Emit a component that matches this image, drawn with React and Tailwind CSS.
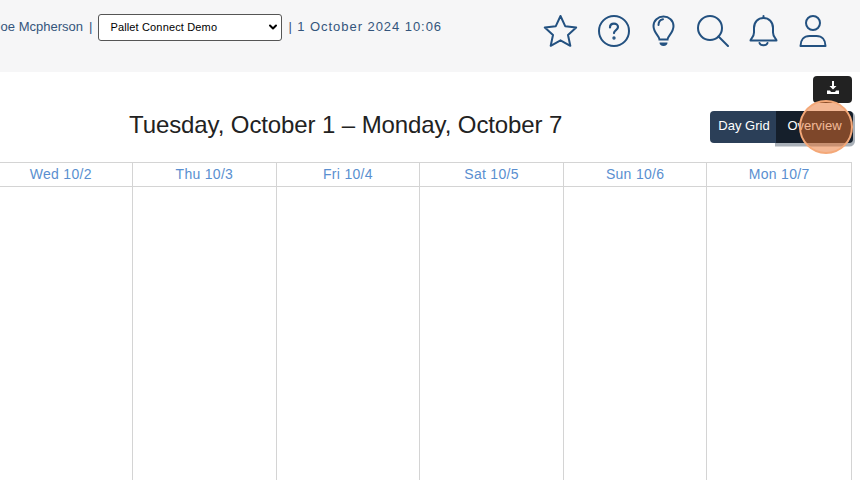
import { ChevronDown } from 'lucide-react'

const days = ['Wed 10/2', 'Thu 10/3', 'Fri 10/4', 'Sat 10/5', 'Sun 10/6', 'Mon 10/7']

const Star = () => (
  <svg width="35" height="33" viewBox="0 0 35 33" fill="none" stroke="#235180" strokeWidth="2" strokeLinejoin="round">
    <path d="M17.500 2l4.700 10.200 11 1.300-8.200 7.500 2.300 10.800-9.800-5.500-9.800 5.500L10 21 1.800 13.500l11-1.300z" />
  </svg>
)

const Help = () => (
  <svg width="32" height="32" viewBox="0 0 32 32" fill="none" stroke="#235180" strokeWidth="2" strokeLinecap="round">
    <circle cx="16" cy="16" r="15" />
    <path d="M12 12.500c0-2.400 1.800-3.800 4-3.800s4 1.400 4 3.400c0 3-4 3-4 6" strokeWidth="2.200" />
    <circle cx="16" cy="23" r="0.7" />
  </svg>
)

const Bulb = () => (
  <svg width="23" height="32" viewBox="0 0 23 32" fill="none" stroke="#235180" strokeWidth="2" strokeLinecap="round">
    <path d="M7.500 24.500c0-3.500-6-6.500-6-13.500C1.500 5.500 6 1.500 11.500 1.500s10 4 10 9.500c0 7-6 10-6 13.500z" />
    <path d="M6.500 10c0-3 1.800-5.200 4.500-5.700" />
    <path d="M7.500 27.500h8c0 2-1.500 3.500-4 3.500s-4-1.500-4-3.500z" fill="#235180" stroke="none" />
  </svg>
)

const Search = () => (
  <svg width="32" height="32" viewBox="0 0 32 32" fill="none" stroke="#235180" strokeWidth="2" strokeLinecap="round">
    <circle cx="13" cy="13" r="12" />
    <path d="M21.500 21.500l9.500 9.500" />
  </svg>
)

const Bell = () => (
  <svg width="29" height="32" viewBox="0 0 29 32" fill="none" stroke="#235180" strokeWidth="2" strokeLinecap="round" strokeLinejoin="round">
    <path d="M14.500 1v2" />
    <path d="M1.500 25.500c0-2 3.500-3 3.500-8V13c0-6 4-10 9.500-10S24 7 24 13v4.500c0 5 3.500 6 3.500 8z" />
    <path d="M10.500 28c1 3 7 3 8 0" />
  </svg>
)

const User = () => (
  <svg width="28" height="32" viewBox="0 0 28 32" fill="none" stroke="#235180" strokeWidth="2" strokeLinecap="round" strokeLinejoin="round">
    <circle cx="14" cy="8" r="7" />
    <path d="M1.500 31c0-6 3.500-10 9-10h7c5.500 0 9 4 9 10z" />
  </svg>
)

const App = () => {
  return (
    <div className="h-[480px] w-[860px] overflow-hidden bg-white font-['Liberation_Sans',sans-serif]">
      {/* Header */}
      <div className="flex h-[72px] bg-[#f6f6f7]">
        <div className="flex h-[54px] w-[460px] shrink-0 items-center text-[13px] text-[#34557c]">
          <div className="flex w-[83px] shrink-0 justify-end">
            <span className="shrink-0 whitespace-nowrap">Joe Mcpherson</span>
          </div>
          <span className="ml-[6px]">|</span>
          <div className="ml-[6px] flex h-[27px] w-[184px] shrink-0 items-center justify-between rounded-[3px] border border-[#555] bg-white pl-[11px] pr-[2px] text-[11px] tracking-[0.15px] text-black">
            <span>Pallet Connect Demo</span>
            <ChevronDown className="h-3 w-3" strokeWidth={4} />
          </div>
          <span className="ml-[6px] whitespace-nowrap tracking-[0.95px]">| 1 October 2024 10:06</span>
        </div>
        <div className="ml-[83px] mt-[14px] flex h-[33px] items-center">
          <Star />
          <span className="ml-[20px]"><Help /></span>
          <span className="ml-[22px]"><Bulb /></span>
          <span className="ml-[22px]"><Search /></span>
          <span className="ml-[20px]"><Bell /></span>
          <span className="ml-[21px]"><User /></span>
        </div>
      </div>

      {/* Title row */}
      <div className="flex h-[90px]">
        <div className="ml-[129px] mt-[36px] whitespace-nowrap text-[24px] leading-[34px] tracking-[-0.1px] text-[#222]">
          Tuesday, October 1 – Monday, October 7
        </div>
        <div className="ml-auto mr-[7px] flex flex-col items-end">
          <button className="mr-[1px] mt-[4px] flex h-[27px] w-[39px] items-center justify-center rounded-[4px] bg-[#222] pb-[3px] text-white">
            <svg width="14" height="14" viewBox="0 0 14 14" fill="currentColor">
              <path d="M6 0h2v5h2.500L7 8.500 3.500 5H6z" />
              <path d="M1 9.500h3l1 1.500h4l1-1.500h3V13H1z" />
            </svg>
          </button>
          <div className="relative mt-[8px] flex h-[32px] w-[143px] text-[13px] text-white">
            <div className="relative z-10 flex w-[66px] items-center justify-center rounded-l-[4px] bg-[#2b3f58] pb-[2px] pl-[2px]">Day Grid</div>
            <div className="flex w-[77px] items-center justify-center rounded-r-[4px] bg-[#151f2b] pb-[2px] shadow-[0.5px_2px_0_1.5px_#a9b0b8]">Overview</div>
            <div className="absolute left-[89px] top-[-11px] z-20 h-[54px] w-[54px] rounded-full border-2 border-[#f4a878] bg-[#e8702a]/50" />
          </div>
        </div>
      </div>

      {/* Week grid */}
      <div className="ml-[-10.5px] mr-[8px]">
        <div className="grid h-[25px] grid-cols-6 border-y border-r border-[#d4d4d4]">
          {days.map((day) => (
            <div key={day} className="flex items-center justify-center border-r border-[#d4d4d4] pb-[1px] text-[14px] tracking-[0.3px] text-[#5a8fd0] last:border-r-0">
              {day}
            </div>
          ))}
        </div>
        <div className="grid h-[293px] grid-cols-6 border-r border-[#d4d4d4]">
          {days.map((day) => (
            <div key={day} className="border-r border-[#d4d4d4] last:border-r-0" />
          ))}
        </div>
      </div>
    </div>
  )
}

export default App
